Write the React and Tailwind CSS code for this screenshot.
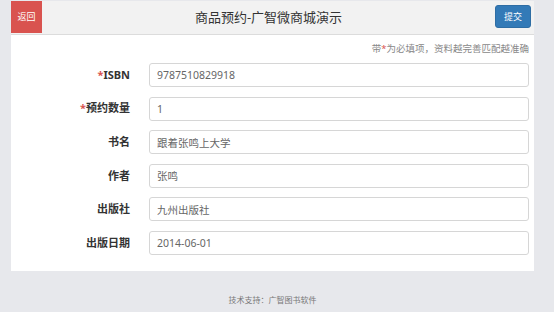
const fields = [
  { label: "ISBN", value: "9787510829918", required: true },
  { label: "预约数量", value: "1", required: true },
  { label: "书名", value: "跟着张鸣上大学" },
  { label: "作者", value: "张鸣" },
  { label: "出版社", value: "九州出版社" },
  { label: "出版日期", value: "2014-06-01" },
];

function Row({ label, value, required }) {
  return (
    <div className="flex items-center h-[24px]">
      <label className="w-[119px] shrink-0 text-right text-[11px] font-bold text-[#333]">
        {required && <span className="text-[#d9534f]">*</span>}
        {label}
      </label>
      <input
        readOnly
        value={value}
        className="ml-[19px] w-[380px] h-[24px] px-[7px] text-[10.5px] text-[#666] border border-[#d6d6d6] rounded-[3px] bg-white outline-none"
      />
    </div>
  );
}

export default function App() {
  return (
    <div
      className="min-h-[312px] bg-[#e7e8ec] pt-[1px] px-[11px]"
      style={{ fontFamily: '"Noto Sans", "Noto Sans CJK SC", sans-serif' }}
    >
      <div className="w-[523px] bg-white">
        <div className="h-[34px] bg-[#f2f2f2] border-b border-[#dcdcdc] flex items-center">
          <button className="w-[31px] h-[32px] self-start bg-[#d9534f] text-white text-[9px]">
            返回
          </button>
          <div className="flex-1 text-center text-[13px] text-[#333]">
            商品预约-广智微商城演示
          </div>
          <button className="mr-[3px] -mt-[2px] w-[36px] h-[23px] rounded-[3px] bg-[#337ab7] border border-[#2e6da4] text-white text-[9px]">
            提交
          </button>
        </div>
        <div className="h-[28px] flex items-center justify-end pr-[5px] text-[9.5px] text-[#888]">
          带<span className="text-[#d9534f]">*</span>为必填项，资料越完善匹配越准确
        </div>
        <div className="flex flex-col gap-[9.6px] pb-[16px]">
          {fields.map((f) => (
            <Row key={f.label} {...f} />
          ))}
        </div>
      </div>
      <div className="pt-[23px] text-center text-[8px] text-[#777] w-[523px]">
        技术支持：广智图书软件
      </div>
    </div>
  );
}
